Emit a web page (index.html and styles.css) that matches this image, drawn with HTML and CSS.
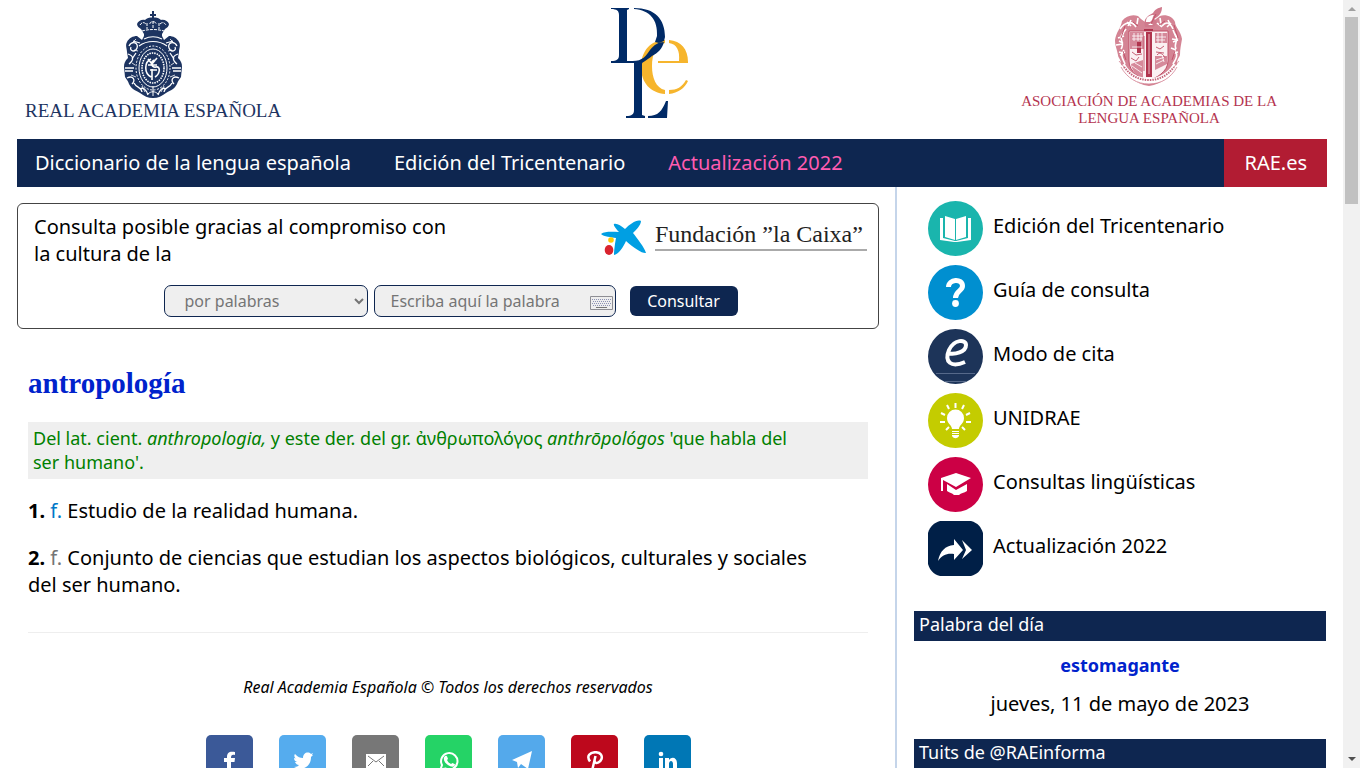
FILE: index.html
```html
<!DOCTYPE html>
<html lang="es">
<head>
<meta charset="utf-8">
<title>antropología | Diccionario de la lengua española</title>
<link rel="stylesheet" href="styles.css">
</head>
<body>
<div class="page">
  <header class="header">
    <a class="brand brand-rae" href="#">
      <svg class="crest-rae" viewBox="0 0 60 88" aria-hidden="true">
        <g fill="#1d3461">
          <path d="M29 1h2v3h2v2h-2v3h-2V6h-2V4h2z"/>
          <path d="M30 8c3-1 6 0 8 2 3-1 7 1 8 4 0 2-2 4-4 5l-3 5v3H21v-3l-3-5c-2-1-4-3-4-5 1-3 5-5 8-4 2-2 5-3 8-2z"/>
          <path d="M21 26h18l2 4 5-4c4 0 8 2 10 6 2 3 0 7 0 10l-1 6c3 3 4 5 4 9l-1 10c-2 3-3 4-4 7-3 6-8 7-11 9-4 3-8 5-13 5s-9-2-13-5c-3-2-8-3-11-9-1-3-2-4-4-7L1 57c0-4 1-6 4-9l-1-6c0-3-2-7 0-10 2-4 6-6 10-6l5 4z"/>
        </g>
        <g fill="none" stroke="#fff" stroke-width="1">
          <path d="M17 15c2-3 4-3 6-1m4 0c-1-3 7-3 6 0m4 0c2-2 4-2 6 1M19 21c7-2 15-2 22 0M24 13v6m6-8v8m6-6v6" stroke-dasharray="3 1"/>
          <path d="M21 29c6-3 12-3 18 0M16 36c8-6 20-6 28 0" stroke-width="1.2"/>
          <ellipse cx="30" cy="58" rx="14" ry="19"/>
          <ellipse cx="30" cy="58" rx="17" ry="22" stroke-dasharray="2 1.5"/>
          <ellipse cx="30" cy="58" rx="11" ry="15" stroke-dasharray="1.5 1" stroke-width="1.6"/>
          <path d="M6 36c3-6 10-3 8 2s-8 3-6-1m46-1c-3-6-10-3-8 2s8 3 6-1M5 44c6 2 6 6 1 10m49-10c-6 2-6 6-1 10M2 58h9M2 61h8M49 58h9M50 61h8M4 68c6-3 9 2 5 6m47-6c-6-3-9 2-5 6M11 73c3 6 7 3 8 9m30-9c-3 6-7 3-8 9M10 31l7 2m33-2-7 2M9 49l4-6m38 6-4-6M17 79c3-2 6 0 8 6m18-6c-3-2-6 0-8 6" stroke-width="1.3"/>
          <path d="M9 53l3 2M8 65l5 2M51 53l-3 2M52 65l-5 2M13 29l-4 4M47 29l4 4M11 40l4 1M49 40l-4 1M22 82l-3-6M38 82l3-6" stroke-width=".8"/>
          <path d="M28 49c-7 3-7 14 0 18m5-17c-7 0-5 8 0 7s4 7-1 10m-7-18 4 5 5-6M25 55h9m-7 5h7m-5-1v11" stroke-width="1.6"/>
          <path d="M25 84c3-3 7-3 10 0M30 76v10"/>
        </g>
      </svg>
      <span>REAL ACADEMIA ESPAÑOLA</span>
    </a>
    <a class="brand brand-dle" href="#" aria-label="DLE">
      <svg class="logo-dle" viewBox="0 0 78 112">
        <path fill="#f6b52d" d="M54 32C40 32 30 43 30 59s10 26 24 27v-4c-9-2-13-12-13-24 0-12 4-21 13-23z"/>
        <path fill="#f6b52d" d="M58 32c12 1 19 9 19 22v1H47v-2h21c1-10-2-17-10-18zM77 73c-3 7-10 12-19 13v-4c8 0 13-3 17-10z"/>
        <path fill="#002a66" d="M0 0h18v1l-2 1v51h3c12 1 16-5 20-11 4-5 8-8 14-8-2 7-6 11-12 14-6 5-10 6-10 8v51l3 1v2H15v-2c6 0 8-2 8-6V55H0v-2c6 0 8-2 8-6V7c0-4-2-6-8-6z"/>
        <path fill="#002a66" d="M23 0c21 0 31 11 31 29l-1 4-5 2-4-1 2-6C47 12 39 2 23 1zM37 108c10 0 14-5 18-15h2l-1 17H37z"/>
      </svg>
    </a>
    <a class="brand brand-asale" href="#">
      <svg class="crest-asale" viewBox="0 0 68 82" aria-hidden="true">
        <path fill="#d48494" d="M7 15c4-5 10-7 16-5l3 3 8 6 7-6 4-3c6-2 13 1 15 6 0 5 6 9 7 17-1 6-2 10-2 16-1 3-3 4-3 9-3 11-15 20-28 22C20 78 9 69 6 58c0-5-3-6-3-9C2 43 0 40 0 34c1-8 6-12 7-19z"/>
        <path fill="#d07a8c" d="M30 21c-2-8 2-11 8-14 3-5 6-5 9-6 0 5-2 9-8 12 4 2 3 5-1 8z"/>
        <path fill="#fff" d="M31 16c0-5 3-7 8-7-2 3-1 5-4 7zM33 19l3-2 2 2z"/>
        <path fill="#fbf0f2" stroke="#c04f67" d="M14 25h39v30c0 11-12 17-20 20-8-3-19-9-19-20z"/>
        <path fill="#d6899a" d="M15 26h14v17H15zM40 27h12v10H40zM40 50h12v8l-12 6zM16 58l12-4v19c-7-4-11-8-12-15z"/>
        <path fill="#b0344e" d="M31 26h6v45h-6zM29 23h9v2h-9zM22 36h4v11h-4z"/>
        <path stroke="#e9bcc5" d="M34 28v40"/>
        <g fill="none" stroke="#fff">
          <path d="M5 23c5-7 12-9 16-2M9 27c-7 6 2 9-3 16m3 1c-5 6 0 10 1 14M47 20c5-6 9-2 11 3m2 5c5 6-2 9 1 15m-1 2c4 5 0 9-2 13M12 16l4 4m-13 12 6-2m-1 8-7 1m4 10 5-3m47-13 6 1m-7 8 5 2M42 17l5 4m9-4-4 4M16 14l-3 6m40-6 3 6M11 23l-5 7m52-6 3 7M4 35l4 2m50-1 5-2M4 46l5 1m50 0 4-1M23 12l-1 6m23-6 1 6" stroke-width="1.6"/>
          <path d="M17 30h11M17 33h10M17 41h10M41 31h10M41 34h9M19 27v8m4-8v8m3-8v8m17-8v10m4-10v10M17 60l10 7m-7-10 7 4m14-7 9-3m-9 7 8-4m-2-5 2 7" stroke-width=".8"/>
          <path d="M7 59c6 11 15 16 27 16s20-5 27-16" stroke-width="6"/>
          <path d="M9 61c7 9 15 13 25 13s18-4 25-13" stroke="#c4657a" stroke-width="2" stroke-dasharray="1.5 1"/>
          <path d="M6 61c6 11 16 17 28 17s22-6 28-17M4 55l5 6m55-6-5 6" stroke="#d48494" stroke-width=".8"/>
        </g>
        <g fill="none" stroke="#c04f67" stroke-width=".9">
          <path d="M41 41l4 2 4-3M41 46l8 1M42 49c3-4 7 0 8 3M17 46l4 3 6-1M16 52l5 3 3-4M29 30v35M41 8l-5 10M10 20l-4 12M59 19l4 13M8 45l3 9M60 45l-3 9M18 16l5 4M50 15l-6 4"/>
        </g>
      </svg>
      <span>ASOCIACIÓN DE ACADEMIAS DE LA<br>LENGUA ESPAÑOLA</span>
    </a>
  </header>

  <nav class="nav">
    <a href="#">Diccionario de la lengua española</a>
    <a href="#">Edición del Tricentenario</a>
    <a class="nav-new" href="#">Actualización 2022</a>
    <a class="nav-rae" href="#">RAE.es</a>
  </nav>

  <div class="columns">
    <main class="main">
      <section class="search">
        <div class="sponsor">
          <p>Consulta posible gracias al compromiso con la cultura de la</p>
          <a class="caixa" href="#">
            <svg class="caixa-star" viewBox="0 0 45 36" aria-hidden="true">
              <path fill="#009fe3" d="M0 14c4-3 12-2 18-2-3-3-6-7-5-8 3-1 7 2 11 5 5-5 12-10 16-8 0 4-5 9-8 12 4 5 11 14 13 20-3 1-12-5-20-12-2 5-8 14-12 14 0-4 1-12 2-17-5-1-12-1-15-4z"/>
              <circle cx="10" cy="20" r="2.800" fill="#ffcb05"/>
              <ellipse cx="8" cy="30" rx="4.300" ry="5" fill="#d9232e"/>
            </svg>
            <span>Fundación ”la Caixa”</span>
          </a>
        </div>
        <form class="search-form">
          <select class="field" aria-label="Tipo de búsqueda"><option>por palabras</option></select>
          <div class="word">
            <input class="field" type="text" placeholder="Escriba aquí la palabra" aria-label="Escriba aquí la palabra">
            <button class="keyboard" type="button" aria-label="Teclado">
              <svg viewBox="0 0 23 14"><path fill="#eee" stroke="#8e8e94" d="M.5.5h22v13H.5z"/><path stroke="#8d93b5" stroke-dasharray="1 1" d="M2 3.500h19M3 5.500h18M2 7.500h19M3 9.500h18"/><path stroke="#777" d="M6 11.500h11"/></svg>
            </button>
          </div>
          <button class="submit" type="button">Consultar</button>
        </form>
      </section>

      <article class="entry">
        <h1>antropología</h1>
        <p class="etymology">Del lat. cient. <em>anthropologia,</em> y este der. del gr. ἀνθρωπολόγος <em>anthrōpológos</em> 'que habla del ser humano'.</p>
        <p class="sense"><b>1.</b> <abbr class="first">f.</abbr> Estudio de la realidad humana.</p>
        <p class="sense"><b>2.</b> <abbr>f.</abbr> Conjunto de ciencias que estudian los aspectos biológicos, culturales y sociales del ser humano.</p>
        <p class="copyright">Real Academia Española © Todos los derechos reservados</p>
      </article>

      <div class="share">
        <a class="facebook" href="#" aria-label="Facebook"><svg viewBox="0 0 20 20"><path d="M7 20v-9H4V7h3V6c0-5 3-6 8-5v3c-3-.4-4 0-4 3h4l-.5 4H11v9z"/></svg></a>
        <a class="twitter" href="#" aria-label="Twitter"><svg viewBox="0 0 20 20"><path d="M2 3c3 3 5 4 8 4 0-5 5-7 8-4l2-1-1 2h1l-2 2c0 11-10 14-17 10 3 0 4-1 5-2-2 0-3-1-4-3h2c-2-1-3-2-3-4l2 .5C1 6 1 4 2 3z"/></svg></a>
        <a class="mail" href="#" aria-label="Correo"><svg viewBox="0 0 20 20"><path d="M0 3h20v14H0z"/><path class="mail-line" d="M2 5l8 6 8-6M2 15l5-5m11 5-5-5"/></svg></a>
        <a class="whatsapp" href="#" aria-label="WhatsApp"><svg viewBox="0 0 20 20"><path class="ring" d="M1.500 18.500 3 14A8.200 8.200 0 1 1 6.500 17.500z"/><path d="M6 5c1-.7 2-.4 2.500 1.500L9 8 8 9c1 2 2 3 4 4l1.500-1 2.500 1.200c0 2-2 2.800-4 2.300C8 14.500 4 10 5 6.500z"/></svg></a>
        <a class="telegram" href="#" aria-label="Telegram"><svg viewBox="0 0 20 20"><path d="M0 9 20 0l-4 18-7-5-3 4-1-6z"/></svg></a>
        <a class="pinterest" href="#" aria-label="Pinterest"><svg viewBox="0 0 20 20"><path class="pin" d="M5 10.500C1 5 5 1.200 10.500 1.200S17.500 5 16.500 8s-6 6-7 2M10.500 5 7 20"/></svg></a>
        <a class="linkedin" href="#" aria-label="LinkedIn"><svg viewBox="0 0 20 20"><path d="M1 7h4v13H1zM7 7h4v2c3-4 8-2 8 3v8h-4v-7c0-4-4-4-4 0v7H7z"/><circle cx="3" cy="3" r="2.300"/></svg></a>
      </div>
    </main>

    <aside class="side">
      <ul class="links">
        <li><a href="#"><svg viewBox="0 0 55 55"><circle cx="27.500" cy="27.500" r="27.500" fill="#1ab5ad"/><path fill="#fff" d="M17 15l10 3v21l-10-3zM28 18l10-3v21l-10 3zM12 17h3v20l12 3h1l12-3V17h3v22l-14 2h-3l-14-2z"/></svg>Edición del Tricentenario</a></li>
        <li><a href="#"><svg viewBox="0 0 55 55"><circle cx="27.500" cy="27.500" r="27.500" fill="#008fd0"/><path fill="none" stroke="#fff" stroke-width="5" d="M20.500 22c0-8 14-9 14-1 0 5-7 5-7 12"/><circle cx="27.500" cy="38.500" r="3.400" fill="#fff"/></svg>Guía de consulta</a></li>
        <li><a href="#"><svg viewBox="0 0 55 55"><circle cx="27.500" cy="27.500" r="27.500" fill="#1d3459"/><path fill="none" stroke="#fff" stroke-width="4" d="M19 24c8 2 19-1 19-8 0-6-12-6-17 5-5 12 2 18 16 12"/><path stroke="#56698a" d="M8 44.500h39M17 52.500h21"/></svg>Modo de cita</a></li>
        <li><a href="#"><svg viewBox="0 0 55 55"><circle cx="27.500" cy="27.500" r="27.500" fill="#c4cc00"/><path fill="#fff" d="M24 36c0-4-5-5-5-11a8.500 8.500 0 0 1 17 0c0 6-5 7-5 11zM24 38h7v5c-2 3-5 3-7 0z"/><path stroke="#fff" stroke-width="2" d="M27.500 10v5M19 12l2 4m15-4-2 4M13 20l4 2m25-2-4 2M12 29h5m21 0h5M18 37l3-3m16 3-3-3"/><path stroke="#c4cc00" d="M24 39.500h7m-7 2h7"/></svg>UNIDRAE</a></li>
        <li><a href="#"><svg viewBox="0 0 55 55"><circle cx="27.500" cy="27.500" r="27.500" fill="#cc0045"/><path fill="#fff" d="M28 16l15 5-15 9-13-7v11h-2V21zM19 27l9 6 11-6v7c-3 2-6 2-8 4h-5c-2-2-4-2-7-4z"/></svg>Consultas lingüísticas</a></li>
        <li><a href="#"><svg viewBox="0 0 55 55"><path fill="#001f47" d="M12 0h31c7 2 10 6 12 12v31c-2 7-6 10-12 12H12C5 53 2 49 0 43V12C2 5 6 2 12 0z"/><path fill="#fff" d="M10 40c2-10 7-15 16-16v-6l9 11-9 10v-6c-7-1-12 1-16 7zM34 19l10 10-10 9 4-9z"/></svg>Actualización 2022</a></li>
      </ul>
      <h2>Palabra del día</h2>
      <p class="day-word"><a href="#">estomagante</a></p>
      <p class="day-date">jueves, 11 de mayo de 2023</p>
      <h2>Tuits de @RAEinforma</h2>
    </aside>
  </div>
</div>
<div class="scrollbar" aria-hidden="true">
  <i class="arrow-up"></i>
  <i class="thumb"></i>
  <i class="arrow-down"></i>
</div>
</body>
</html>
```
FILE: styles.css
```css
* { box-sizing: border-box; }
body {
  margin: 0;
  height: 100vh;
  overflow: hidden;
  display: flex;
  background: #fff;
  color: #000;
  font: 20px/27px "Noto Sans", "Open Sans", sans-serif;
}
p, h1, h2, ul { margin: 0; padding: 0; }
a { color: inherit; text-decoration: none; }
svg { display: block; }
input, select, button { font-family: inherit; }

.page { flex: 1; min-width: 0; padding: 0 16px 0 17px; }

.header {
  height: 139px;
  padding: 6px 50px 0 6px;
  display: grid;
  grid-template-columns: 1fr auto 1fr;
}
.brand { display: flex; flex-direction: column; align-items: center; font-family: "Liberation Serif", serif; }
.brand-rae { justify-self: start; color: #1d3461; font-size: 19px; line-height: 26px; padding: 4px 0 0 2px; }
.brand-asale { justify-self: end; color: #b4344f; font-size: 15px; line-height: 17px; text-align: center; gap: 5px; }
.crest-rae { width: 60px; height: 88px; }
.crest-asale { width: 68px; height: 82px; }
.logo-dle { width: 78px; height: 112px; margin-top: 2px; }

.nav { display: flex; height: 48px; line-height: 48px; background: #0e2650; color: #fff; padding-left: 18px; gap: 43px; }
.nav-new { color: #ff5cb0; }
.nav-rae { margin-left: auto; padding: 0 20px; background: #b21c33; }

.columns { display: grid; grid-template-columns: 880fr 430fr; }
.main { border-right: 2px solid #c5d5ea; padding: 16px 16px 0 0; }

.search { border: 1px solid #444; border-radius: 6px; padding: 9px 11px 11px 16px; }
.sponsor { display: flex; justify-content: space-between; }
.sponsor p { max-width: 428px; }
.caixa { display: flex; gap: 9px; margin-top: 7px; height: 36px; }
.caixa-star { width: 45px; height: 36px; }
.caixa span { width: 212px; font: 24px/29px "Liberation Serif", serif; border-bottom: 2px solid #aaa; height: 31px; color: #222; }
.search-form { display: flex; justify-content: center; align-items: center; gap: 6px; margin-top: 18px; }
.field {
  height: 32px;
  border: 1px solid #0e2650;
  border-radius: 7px;
  background: #efefef;
  color: #757575;
  font-size: 16px;
  padding: 0 16px;
}
select.field { width: 204px; }
.word { position: relative; display: flex; margin-right: 8px; }
.word .field { width: 242px; }
.keyboard { position: absolute; right: 3px; top: 11px; width: 23px; height: 14px; padding: 0; border: 0; background: none; }
.submit { width: 108px; height: 30px; border: 0; border-radius: 6px; background: #0e2650; color: #fff; font-size: 16px; padding: 0; }

.entry { padding: 36px 11px 0; }
.entry h1 { font: bold 29px/36px "Liberation Serif", serif; color: #0022cc; }
.etymology { margin: 21px 0 18px; padding: 4px 60px 5px 5px; background: #efefef; color: #008000; font-size: 18px; line-height: 24px; }
.sense { margin-bottom: 20px; padding-right: 32px; }
.sense abbr { color: #757575; }
.sense .first { color: #0077c8; }
.copyright { margin-top: 34px; padding-top: 41px; border-top: 1px solid #eee; text-align: center; font-size: 16px; font-style: italic; }

.share { display: flex; justify-content: center; gap: 26px; margin-top: 34px; }
.share a { width: 47px; height: 47px; border-radius: 5px; padding: 16px 14px; }
.share svg { width: 20px; height: 20px; fill: #fff; }
.facebook { background: #3b5998; }
.twitter { background: #55acee; }
.mail { background: #777; }
.whatsapp { background: #25d366; }
.telegram { background: #54a9eb; }
.pinterest { background: #bd081c; }
.linkedin { background: #0077b5; }
.share .mail-line { fill: none; stroke: #777; }
.share .ring { fill: none; stroke: #fff; stroke-width: 2; }
.share .pin { fill: none; stroke: #fff; stroke-width: 2.5; }

.side { padding: 14px 1px 0 17px; }
.links { list-style: none; padding-left: 14px; display: grid; gap: 9px; margin-bottom: 35px; }
.links a { display: flex; gap: 10px; line-height: 50px; }
.links svg { width: 55px; height: 55px; }
.side h2 { background: #0e2650; color: #fff; font-size: 18px; font-weight: normal; line-height: 27px; padding: 0 5px 3px; }
.day-word { margin-top: 11px; text-align: center; font-size: 18px; font-weight: bold; color: #0022cc; }
.day-date { margin: 11px 0 22px; text-align: center; }

.scrollbar { width: 17px; background: #f1f1f1; display: flex; flex-direction: column; align-items: center; padding: 7px 0; }
.arrow-up { border: 4px solid transparent; border-top: 0; border-bottom-color: #a0a0a0; }
.thumb { width: 13px; height: 187px; background: #c1c1c1; margin-top: 6px; }
.arrow-down { border: 4px solid transparent; border-bottom: 0; border-top-color: #505050; margin-top: auto; }
```
